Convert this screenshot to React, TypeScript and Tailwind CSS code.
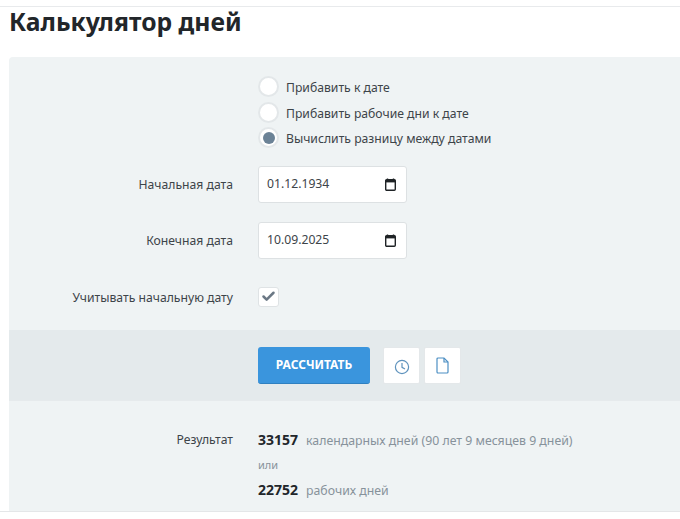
import { Check } from "lucide-react";

const sans = "font-['Noto_Sans','Open_Sans',sans-serif]";

function Radio({ label, checked }: { label: string; checked?: boolean }) {
  return (
    <div className="flex h-[25.5px] items-center">
      <span className="flex h-[21px] w-[21px] items-center justify-center rounded-full border-2 border-[#e3e7e9] bg-white">
        {checked && <span className="h-[12px] w-[12px] rounded-full bg-[#6b8296]" />}
      </span>
      <span className="ml-[7px] mt-[3px] text-[12.2px] text-[#3d4449]">{label}</span>
    </div>
  );
}

function CalendarIcon() {
  return (
    <svg width="11" height="13" viewBox="0 0 11 13" className="text-[#1f2326]">
      <path d="M2.5 0.5v2M8.5 0.5v2" stroke="currentColor" strokeWidth="1.4" />
      <rect x="0.7" y="1.8" width="9.6" height="10.4" rx="1" fill="none" stroke="currentColor" strokeWidth="1.4" />
      <rect x="0.7" y="1.8" width="9.6" height="2.6" fill="currentColor" />
    </svg>
  );
}

function DateRow({ label, value }: { label: string; value: string }) {
  return (
    <div className="flex items-center">
      <div className="mt-[2px] w-[224px] text-right text-[12.2px] text-[#3d4449]">{label}</div>
      <div className="ml-[25px] flex h-[37px] w-[149px] items-center justify-between rounded-[3px] border border-[#dde1e3] bg-white pl-[8px] pr-[10px] text-[12.2px] text-[#3d4449]">
        <span className="mt-[1px]">{value}</span>
        <CalendarIcon />
      </div>
    </div>
  );
}

function IconButton({ children }: { children: React.ReactNode }) {
  return (
    <button className="flex h-[37px] w-[37px] items-center justify-center rounded-[2px] border border-[#e4e8ea] bg-white">
      {children}
    </button>
  );
}

export default function App() {
  return (
    <div className={`${sans} h-[519px] w-[680px] overflow-hidden bg-white`}>
      <div className="mt-[6px] h-px bg-[#e8eaec]" />
      <h1 className="ml-[9px] h-[50px] text-[24.7px] font-bold leading-[30px] text-[#22262a]">
        Калькулятор дней
      </h1>
      <div className="ml-[9px] h-[454px] rounded-tl-[4px] bg-[#eff3f4]">
        <div className="h-[273px] pt-[17px]">
          <div className="ml-[249px]">
            <Radio label="Прибавить к дате" />
            <Radio label="Прибавить рабочие дни к дате" />
            <Radio label="Вычислить разницу между датами" checked />
          </div>
          <div className="mt-[15px] flex flex-col gap-[19px]">
            <DateRow label="Начальная дата" value="01.12.1934" />
            <DateRow label="Конечная дата" value="10.09.2025" />
          </div>
          <div className="mt-[28px] flex items-center">
            <div className="mt-[2px] w-[224px] text-right text-[12.2px] text-[#3d4449]">
              Учитывать начальную дату
            </div>
            <span className="ml-[25px] flex h-[20px] w-[21px] items-center justify-center rounded-[3px] border border-[#dfe3e5] bg-white">
              <Check size={15} strokeWidth={4} className="text-[#6b7885]" />
            </span>
          </div>
        </div>
        <div className="flex h-[71px] items-center gap-[13px] border-b border-[#e6eaec] bg-[#e4eaec] pl-[249px]">
          <button className="flex h-[37px] w-[112px] items-center justify-center rounded-[3px] border-b border-[#2f80c0] bg-[#3a95dd] text-[12px] font-bold text-white">
            РАССЧИТАТЬ
          </button>
          <div className="flex gap-[4px]">
            <IconButton>
              <svg width="16" height="16" viewBox="0 0 16 16" fill="none" stroke="#5f93bd" strokeWidth="1.2" className="mt-[4px]">
                <circle cx="8" cy="8" r="6.6" />
                <path d="M8 4v4.3l3 1.7" />
              </svg>
            </IconButton>
            <IconButton>
              <svg width="13" height="17" viewBox="0 0 13 17" fill="none" stroke="#4d8fc4" strokeWidth="1.2">
                <path d="M1 2a1 1 0 0 1 1-1h6l4 4v10a1 1 0 0 1-1 1H2a1 1 0 0 1-1-1z" />
                <path d="M8 1v4h4" />
              </svg>
            </IconButton>
          </div>
        </div>
        <div className="flex pt-[26px]">
          <div className="mt-[1px] w-[224px] text-right text-[12.2px] leading-[24px] text-[#3d4449]">Результат</div>
          <div className="ml-[25px]">
            <div className="flex h-[25px] items-baseline leading-[25px]">
              <span className="text-[14px] font-bold text-[#22262a]">33157</span>
              <span className="ml-[8px] text-[12.3px] text-[#87929b]">календарных дней (90 лет 9 месяцев 9 дней)</span>
            </div>
            <div className="h-[25px] text-[11px] leading-[25px] text-[#87929b]">или</div>
            <div className="flex h-[25px] items-baseline leading-[25px]">
              <span className="text-[14px] font-bold text-[#22262a]">22752</span>
              <span className="ml-[8px] text-[12.3px] text-[#87929b]">рабочих дней</span>
            </div>
          </div>
        </div>
      </div>
      <div className="h-px bg-[#e4e6e8]" />
    </div>
  );
}
